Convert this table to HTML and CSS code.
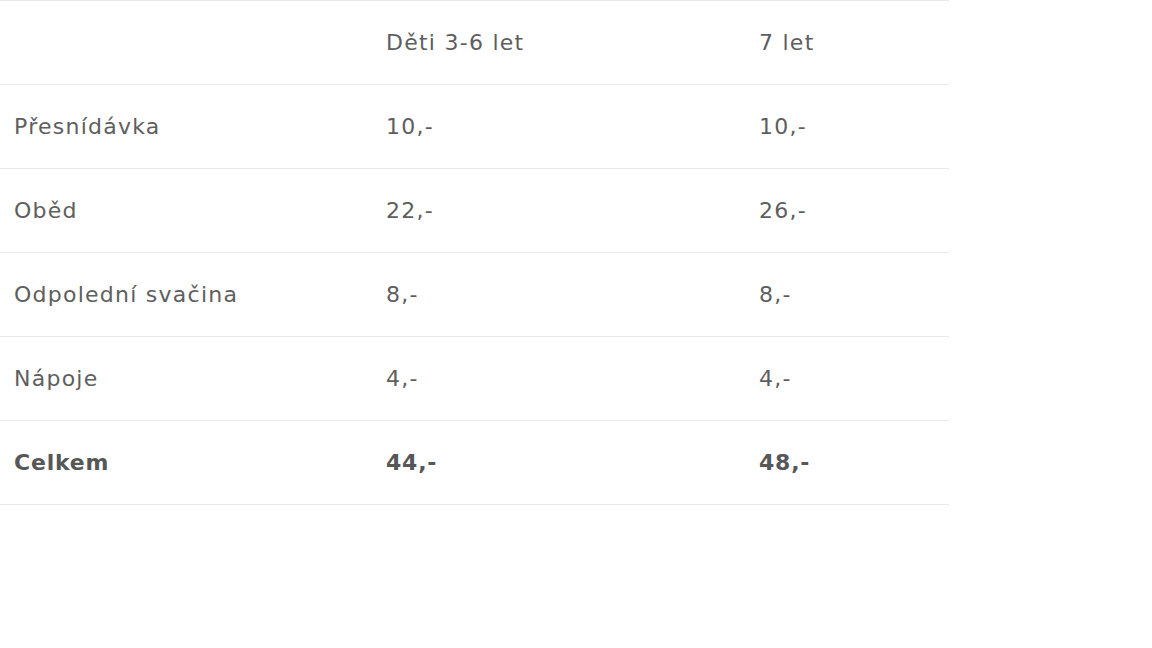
FILE: index.html
```html
<!DOCTYPE html>
<html lang="cs">
<head>
<meta charset="utf-8">
<link rel="stylesheet" href="styles.css">
</head>
<body>
<table class="prices">
  <colgroup>
    <col class="c1"><col class="c2"><col class="c3">
  </colgroup>
  <thead>
    <tr><th></th><th>Děti 3-6 let</th><th>7 let</th></tr>
  </thead>
  <tbody>
    <tr><td>Přesnídávka</td><td>10,-</td><td>10,-</td></tr>
    <tr><td>Oběd</td><td>22,-</td><td>26,-</td></tr>
    <tr><td>Odpolední svačina</td><td>8,-</td><td>8,-</td></tr>
    <tr><td>Nápoje</td><td>4,-</td><td>4,-</td></tr>
    <tr class="total"><td>Celkem</td><td>44,-</td><td>48,-</td></tr>
  </tbody>
</table>
</body>
</html>
```

FILE: styles.css
```css
html, body {
  margin: 0;
  padding: 0;
  background: #ffffff;
}
.prices {
  width: 949px;
  border-collapse: collapse;
  table-layout: fixed;
  font-family: "DejaVu Sans", sans-serif;
  font-size: 22px;
  line-height: 26px;
  letter-spacing: 1.25px;
  color: #5e5e5e;
}
.c1 { width: 372px; }
.c2 { width: 373px; }
.c3 { width: 204px; }
.prices th, .prices td {
  height: 83px;
  padding: 0 0 0 14px;
  text-align: left;
  vertical-align: middle;
  font-weight: normal;
  border-top: 1px solid #e8e8e8;
  border-bottom: 1px solid #e8e8e8;
}
.prices .total td {
  font-weight: bold;
  letter-spacing: 0.8px;
  color: #575757;
}
```
